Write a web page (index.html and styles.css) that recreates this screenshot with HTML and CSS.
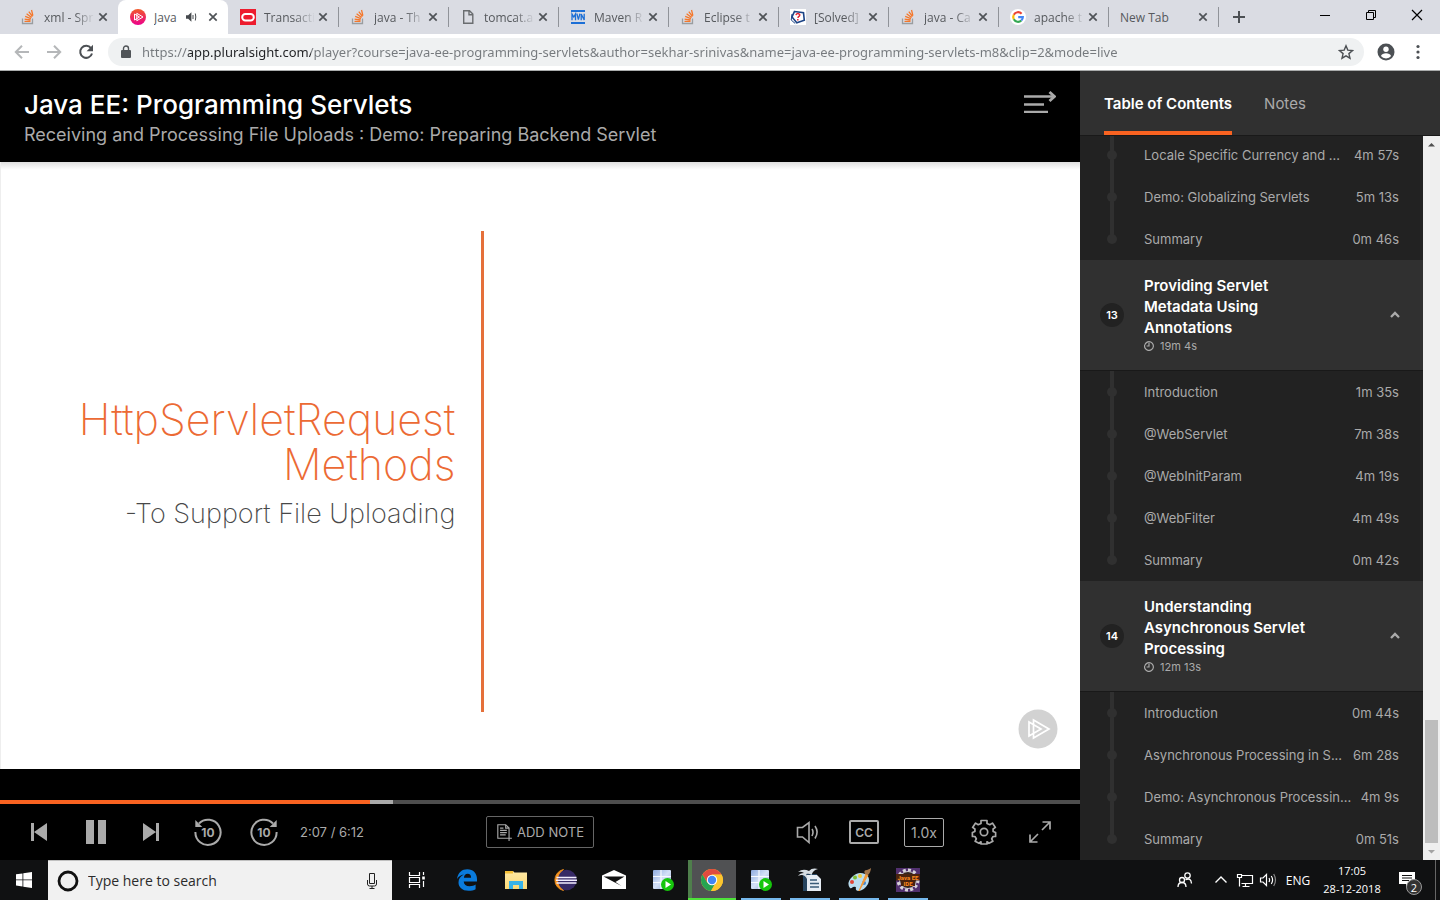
FILE: index.html
```html
<!DOCTYPE html>
<html lang="en">
<head>
<meta charset="utf-8">
<meta name="viewport" content="width=device-width, initial-scale=1">
<title>Java EE: Programming Servlets</title>
<link rel="stylesheet" href="styles.css">
</head>
<body>
<svg class="defs" aria-hidden="true">
  <defs>
    <linearGradient id="ps-fill" x1="0" y1="0" x2="0" y2="1"><stop offset="0" stop-color="#f15b2a"/><stop offset="1" stop-color="#ec008c"/></linearGradient>
    <linearGradient id="folder-fill" x1="0" y1="0" x2="0" y2="1"><stop offset="0" stop-color="#ffe9a6"/><stop offset="1" stop-color="#fbd976"/></linearGradient>
    <linearGradient id="server-fill" x1="0" y1="0" x2="1" y2="1"><stop offset="0" stop-color="#8fabdf"/><stop offset=".5" stop-color="#d5e1f7"/><stop offset="1" stop-color="#8aa5d6"/></linearGradient>
    <symbol id="so" viewBox="0 0 16 16">
      <path d="M2.500 9.500v5h10v-5" fill="none" stroke="#9a9da0" stroke-width="1.300"/>
      <path d="M4.500 12.300h6M4.600 10.100l6 .9M5.200 7.400l5.700 2.300M6.600 4.700l5 3.700M8.800 2.600l3.700 4.900M11.500 1l1.400 5.700" fill="none" stroke="#f4772b" stroke-width="1.300"/>
    </symbol>
    <symbol id="x" viewBox="0 0 16 16"><path d="M4.300 4.300l7.400 7.400M11.700 4.300l-7.400 7.400" fill="none" stroke="#4f5357" stroke-width="1.700"/></symbol>
    <symbol id="clock" viewBox="0 0 10 10"><path d="M5 .6a4.400 4.400 0 1 1-4.200 3M5 2v3H2.600M1 3.500A4.400 4.400 0 0 1 5 .6" fill="none" stroke="#aaa" stroke-width="1.200"/></symbol>
    <symbol id="chevron" viewBox="0 0 10 8"><path d="M1 6l4-4 4 4" fill="none" stroke="#aaa" stroke-width="2.300"/></symbol>
    <symbol id="server" viewBox="0 0 24 24">
      <rect x="2" y="2" width="18" height="19" rx="1" fill="url(#server-fill)"/>
      <path d="M2 8.500h18M2 14.500h18M10 2v19" stroke="#f7faff" stroke-width="1.200"/>
      <circle cx="16.500" cy="16.500" r="6.500" fill="#16c60c"/><path d="M14.500 13v7l5.500-3.500z" fill="#fff"/>
    </symbol>
  </defs>
</svg>

<header class="browser">
  <div class="tabstrip">
    <div class="tab"><svg class="fav"><use href="#so"/></svg><span class="tab-title">xml - Spr</span><button class="tab-close" aria-label="Close tab"><svg><use href="#x"/></svg></button></div>
    <div class="tab active">
      <svg class="fav" viewBox="0 0 16 16"><circle cx="8" cy="8" r="8" fill="url(#ps-fill)"/><path d="M4.500 5v6l5-3zM6.800 4.300v7.400L13 8z" fill="none" stroke="#fff" stroke-width="1"/></svg>
      <span class="tab-title short">Java</span>
      <svg class="audio" viewBox="0 0 12 12"><path d="M1 4.300h2.200L6.400 1.300v9.400L3.200 7.700H1z" fill="#45494d"/><path d="M8 4v4M10.300 2.500q1 3.500 0 7" fill="none" stroke="#45494d"/></svg>
      <button class="tab-close" aria-label="Close tab"><svg><use href="#x"/></svg></button>
    </div>
    <div class="tab ruled"><svg class="fav" viewBox="0 0 16 16"><path d="M0 0h16v16H0z" fill="#ed1c2e"/><rect x="2.200" y="5" width="11.600" height="6.400" rx="3.200" fill="none" stroke="#fff" stroke-width="2"/></svg><span class="tab-title">Transacti</span><button class="tab-close" aria-label="Close tab"><svg><use href="#x"/></svg></button></div>
    <div class="tab ruled"><svg class="fav"><use href="#so"/></svg><span class="tab-title">java - Th</span><button class="tab-close" aria-label="Close tab"><svg><use href="#x"/></svg></button></div>
    <div class="tab ruled"><svg class="fav" viewBox="0 0 16 16"><path d="M3.700 1.700h5.800l3.300 3.300v9.300H3.700zM9 1.700v4h3.800" fill="none" stroke="#6a6d70" stroke-width="1.400"/></svg><span class="tab-title">tomcat.a</span><button class="tab-close" aria-label="Close tab"><svg><use href="#x"/></svg></button></div>
    <div class="tab ruled"><svg class="fav" viewBox="0 0 16 16"><path d="M1 1h14v2H1zM1 13h14v2H1z" fill="#1c6fd6"/><path d="M2 11.300V5l1.800 3L5.500 5v6.300M6.900 4.700l1.500 6 1.500-6M11.200 11.300V5l3 6V4.700" fill="none" stroke="#1c6fd6" stroke-width="1.300"/></svg><span class="tab-title">Maven R</span><button class="tab-close" aria-label="Close tab"><svg><use href="#x"/></svg></button></div>
    <div class="tab ruled"><svg class="fav"><use href="#so"/></svg><span class="tab-title">Eclipse t</span><button class="tab-close" aria-label="Close tab"><svg><use href="#x"/></svg></button></div>
    <div class="tab ruled"><svg class="fav" viewBox="0 0 16 16"><path d="M0 0h16v16H0z" fill="#fff"/><path d="M4.500 2.500l9 1.300.8 7.500-7.500 2.500L2 8z" fill="none" stroke="#1d4486" stroke-width="1.600"/><path d="M2 5l-.8 6 4 3.500" fill="none" stroke="#1d4486"/><path d="M6 6.200q.4-2 2.600-1.500 2 .8.600 2.500-1.200.8-1.200 1.800M7.800 10v1.400" fill="none" stroke="#e32636" stroke-width="1.500"/></svg><span class="tab-title">[Solved]</span><button class="tab-close" aria-label="Close tab"><svg><use href="#x"/></svg></button></div>
    <div class="tab ruled"><svg class="fav"><use href="#so"/></svg><span class="tab-title">java - Ca</span><button class="tab-close" aria-label="Close tab"><svg><use href="#x"/></svg></button></div>
    <div class="tab ruled"><svg class="fav" viewBox="0 0 16 16"><circle cx="8" cy="8" r="8" fill="#fff"/><g fill="none" stroke-width="2.200"><path d="M11.600 4.800A4.800 4.800 0 0 0 3.800 5.700" stroke="#ea4335"/><path d="M3.800 5.700a4.800 4.800 0 0 0 0 4.600" stroke="#fbbc05"/><path d="M3.800 10.300a4.800 4.800 0 0 0 7.500 1.200" stroke="#34a853"/><path d="M11.300 11.500A4.800 4.800 0 0 0 12.800 8.200H8.200" stroke="#4285f4"/></g></svg><span class="tab-title">apache t</span><button class="tab-close" aria-label="Close tab"><svg><use href="#x"/></svg></button></div>
    <div class="tab ruled"><span class="tab-title whole">New Tab</span><button class="tab-close" aria-label="Close tab"><svg><use href="#x"/></svg></button></div>
    <button class="new-tab" aria-label="New tab"><svg viewBox="0 0 14 14"><path d="M7 1v12M1 7h12" stroke="#4c5054" stroke-width="2"/></svg></button>
    <div class="window-buttons">
      <button aria-label="Minimize"><svg viewBox="0 0 12 12"><path d="M1 6.500h10" stroke="#000"/></svg></button>
      <button aria-label="Restore"><svg viewBox="0 0 12 12"><path d="M1.500 3.500h7v7h-7zM3.500 3.500v-2h7v7h-2" fill="none" stroke="#000"/></svg></button>
      <button aria-label="Close"><svg viewBox="0 0 12 12"><path d="M1 1l10 10M11 1L1 11" stroke="#000" stroke-width="1.200"/></svg></button>
    </div>
  </div>
  <div class="toolbar">
    <button aria-label="Back"><svg viewBox="0 0 16 16"><path d="M15 8H2M8 1.800L1.800 8 8 14.200" fill="none" stroke="#b5b7b9" stroke-width="2"/></svg></button>
    <button aria-label="Forward"><svg viewBox="0 0 16 16"><path d="M1 8h13M8 1.800L14.200 8 8 14.200" fill="none" stroke="#b5b7b9" stroke-width="2"/></svg></button>
    <button aria-label="Reload"><svg viewBox="0 0 16 16"><path d="M13 4.200A6 6 0 1 0 14 9.500" fill="none" stroke="#4c5054" stroke-width="2"/><path d="M15 .8v6.400H8.600z" fill="#4c5054"/></svg></button>
    <div class="omnibox">
      <svg class="lock" viewBox="0 0 10 14"><path d="M1 5h8q1 0 1 1v6q0 1-1 1H1q-1 0-1-1V6q0-1 1-1z" fill="#505458"/><path d="M2.500 6V3.500a2.500 2.500 0 0 1 5 0V6" fill="none" stroke="#505458" stroke-width="1.400"/></svg>
      <input class="url" type="text" aria-label="Address" value="https://app.pluralsight.com/player?course=java-ee-programming-servlets&amp;author=sekhar-srinivas&amp;name=java-ee-programming-servlets-m8&amp;clip=2&amp;mode=live">
      <button class="star" aria-label="Bookmark"><svg viewBox="0 0 16 16"><path d="M8 1.800l1.800 4.300 4.700.4-3.600 3.100 1.100 4.600L8 11.800l-4 2.400 1.100-4.600-3.600-3.100 4.700-.4z" fill="none" stroke="#4c5054" stroke-width="1.400"/></svg></button>
    </div>
    <button class="profile" aria-label="Profile"><svg viewBox="0 0 18 18"><circle cx="9" cy="9" r="8.500" fill="#4c5054"/><circle cx="9" cy="6.300" r="2.700" fill="#fff"/><path d="M3.900 13q1.300-2.700 5.100-2.700t5.100 2.700Q12.300 15.400 9 15.400T3.900 13z" fill="#fff"/></svg></button>
    <button aria-label="Menu"><svg viewBox="0 0 16 16"><g fill="#4c5054"><circle cx="8" cy="2.500" r="1.600"/><circle cx="8" cy="8" r="1.600"/><circle cx="8" cy="13.500" r="1.600"/></g></svg></button>
  </div>
</header>

<div class="app">
  <main class="player">
    <header class="player-head">
      <div>
        <h1>Java EE: Programming Servlets</h1>
        <p>Receiving and Processing File Uploads : Demo: Preparing Backend Servlet</p>
      </div>
      <button class="panel-toggle" aria-label="Toggle side panel"><svg viewBox="0 0 34 24"><path d="M2 7.500h29M2 15.500h20M2 23h24" stroke="#aaa" stroke-width="2.600"/><path d="M27.500 3L32.500 7.500l-5 4.500" fill="none" stroke="#aaa" stroke-width="2.800"/></svg></button>
    </header>
    <section class="slide">
      <div class="slide-text">
        <h2>HttpServletRequest<br>Methods</h2>
        <p>-To Support File Uploading</p>
      </div>
      <svg class="watermark" viewBox="0 0 40 40"><circle cx="20" cy="20" r="19.500" fill="#d2d2d2"/><path d="M11 13v14l12-7zM15.500 11v18L31 20z" fill="none" stroke="#fff" stroke-width="1.700"/></svg>
    </section>
    <input class="progress" type="range" min="0" max="372" value="127" aria-label="Playback position">
    <div class="controls">
      <div class="group">
        <button aria-label="Previous clip"><svg viewBox="0 0 28 28"><path d="M5 5h3v18H5zM21 5v18L8 14z" fill="#aaa"/></svg></button>
        <button aria-label="Pause"><svg viewBox="0 0 28 28"><path d="M4 2h8v24H4zM16 2h8v24h-8z" fill="#aaa"/></svg></button>
        <button aria-label="Next clip"><svg viewBox="0 0 28 28"><path d="M18 5h3v18h-3zM5 5v18l13-9z" fill="#aaa"/></svg></button>
        <button aria-label="Back 10 seconds"><svg viewBox="0 0 28 28"><path d="M5 5.500A12.600 12.600 0 1 1 1.400 14" fill="none" stroke="#aaa" stroke-width="2"/><path d="M1.300 2v7h7z" fill="#aaa"/><text class="skip" x="14" y="18.500">10</text></svg></button>
        <button aria-label="Forward 10 seconds"><svg viewBox="0 0 28 28"><path d="M23 5.500A12.600 12.600 0 1 0 26.600 14" fill="none" stroke="#aaa" stroke-width="2"/><path d="M26.700 2v7h-7z" fill="#aaa"/><text class="skip" x="14" y="18.500">10</text></svg></button>
        <span class="time">2:07 / 6:12</span>
      </div>
      <button class="add-note"><svg viewBox="0 0 14 16"><path d="M9 13.500H1.500v-12h7l3 3V11M8.500 1.500v3h3M3.500 4.500h3M3.500 6.500h6M3.500 8.500h6M3.500 10.500h5M11.500 11v5M9 13.500h5" fill="none" stroke="#aaa"/></svg>ADD NOTE</button>
      <div class="group end">
        <button aria-label="Volume"><svg viewBox="0 0 28 28"><path d="M3.500 9.500h5L15 4.500v20l-6.500-5.500h-5zM18 11q2 3 0 7M21 8q4.200 6 0 12.500" fill="none" stroke="#aaa" stroke-width="1.600"/></svg></button>
        <button aria-label="Captions"><span class="box cc">CC</span></button>
        <button class="speed" aria-label="Playback speed"><span class="box rate">1.0x</span></button>
        <button aria-label="Settings"><svg viewBox="0 0 28 28"><path d="M11 2.500h6v3l2.800 1.200 2.600-1.600 3 4.300-2.300 1.600v2.500l2.500 1v4h-2.500l-1.400 2.300 1.200 2.500-3.900 2-2-1.500v2.200h-6v-2.200l-2 1.500-3.900-2 1.200-2.500-1.400-2.300H2.400v-4l2.500-1V11L2.600 9.400l3-4.300 2.600 1.600L11 5.500z" fill="none" stroke="#aaa" stroke-width="1.700" stroke-linejoin="round"/><circle cx="14" cy="14" r="3.700" fill="none" stroke="#aaa" stroke-width="1.700"/></svg></button>
        <button aria-label="Full screen"><svg viewBox="0 0 28 28"><path d="M16 12l8-8M16.500 4H24v7.500M12 16l-8 8M4 16.500V24h7.500" fill="none" stroke="#aaa" stroke-width="1.700"/></svg></button>
      </div>
    </div>
  </main>

  <aside class="side">
    <nav class="side-tabs"><button class="selected">Table of Contents</button><button>Notes</button></nav>
    <div class="side-body">
      <div class="toc">
        <ul class="clips">
          <li><a href="#"><span>Locale Specific Currency and ...</span><time>4m 57s</time></a></li>
          <li><a href="#"><span>Demo: Globalizing Servlets</span><time>5m 13s</time></a></li>
          <li><a href="#"><span>Summary</span><time>0m 46s</time></a></li>
        </ul>
        <button class="module"><span class="num">13</span><span class="module-text"><strong>Providing Servlet Metadata Using Annotations</strong><small><svg><use href="#clock"/></svg>19m 4s</small></span><svg class="caret"><use href="#chevron"/></svg></button>
        <ul class="clips">
          <li><a href="#"><span>Introduction</span><time>1m 35s</time></a></li>
          <li><a href="#"><span>@WebServlet</span><time>7m 38s</time></a></li>
          <li><a href="#"><span>@WebInitParam</span><time>4m 19s</time></a></li>
          <li><a href="#"><span>@WebFilter</span><time>4m 49s</time></a></li>
          <li><a href="#"><span>Summary</span><time>0m 42s</time></a></li>
        </ul>
        <button class="module"><span class="num">14</span><span class="module-text"><strong>Understanding Asynchronous Servlet Processing</strong><small><svg><use href="#clock"/></svg>12m 13s</small></span><svg class="caret"><use href="#chevron"/></svg></button>
        <ul class="clips">
          <li><a href="#"><span>Introduction</span><time>0m 44s</time></a></li>
          <li><a href="#"><span>Asynchronous Processing in S...</span><time>6m 28s</time></a></li>
          <li><a href="#"><span>Demo: Asynchronous Processin...</span><time>4m 9s</time></a></li>
          <li><a href="#"><span>Summary</span><time>0m 51s</time></a></li>
        </ul>
      </div>
      <div class="scrollbar" aria-hidden="true">
        <svg viewBox="0 0 17 17"><path d="M5 10.500h7L8.500 7z" fill="#505050"/></svg>
        <div class="thumb"></div>
        <svg viewBox="0 0 17 17"><path d="M5 7h7l-3.500 3.500z" fill="#a3a3a3"/></svg>
      </div>
    </div>
  </aside>
</div>

<footer class="taskbar">
  <button class="start" aria-label="Start"><svg viewBox="0 0 16 16"><path d="M0 2.300l6.500-.9v6.100H0zM7.300 1.300L16 0v7.500H7.300zM0 8.300h6.500v6.200L0 13.600zM7.300 8.300H16V16l-8.700-1.300z" fill="#fff"/></svg></button>
  <label class="search">
    <svg viewBox="0 0 22 22"><circle cx="11" cy="11" r="9" fill="none" stroke="#111" stroke-width="2.800"/></svg>
    <input type="text" placeholder="Type here to search" aria-label="Type here to search">
    <svg class="mic" viewBox="0 0 12 18"><path d="M3.500 1.500h5v10h-5zM1.500 8v4q0 2 2 2h5q2 0 2-2V8M6 14v2.500M3.500 16.500h5" fill="none" stroke="#222"/></svg>
  </label>
  <div class="apps">
    <button class="task-view" aria-label="Task View"><svg viewBox="0 0 24 24"><path d="M4.500 4v3.500h10V4M4.500 20v-3.500h10V20M4.500 9.500h10v5h-10zM18.500 4v3M18.500 13v6" fill="none" stroke="#fff" stroke-width="1.200"/><path d="M17.200 8.500h2.600v3h-2.600z" fill="#fff"/></svg></button>
    <button aria-label="Edge"><svg viewBox="0 0 24 24"><path d="M2 11C3 4.500 7 1.300 12.300 1.300c6 0 9.700 4 9.700 10v2.200H8.700c.2 3 2.300 4.700 5.900 4.700 2.500 0 4.700-.7 6-1.600v4.700c-1.800 1-4.300 1.500-7.100 1.500C7 22.800 3.500 19 3.500 14.500c0-3.600 2-6.300 5.300-7.900C6 7 3.600 8.600 2 11zm6.900-1.300h7.200c0-2.500-1.200-4-3.400-4s-3.500 1.500-3.800 4z" fill="#0a7bdc"/></svg></button>
    <button aria-label="File Explorer"><svg viewBox="0 0 24 24"><path d="M1 3h8l1.500 1.500H23V21H1z" fill="url(#folder-fill)"/><path d="M1 3h8v2.500H1z" fill="#f5bf35"/><path d="M5 21v-8h14v8h-4v-4H9v4z" fill="#38b3e8"/></svg></button>
    <button aria-label="Eclipse"><svg viewBox="0 0 24 24"><circle cx="13.500" cy="12" r="10.300" fill="#372a66"/><path d="M10.500 1.500A10.700 10.700 0 0 0 10.500 22.500Q4.500 18.500 4.500 12T10.500 1.500z" fill="#f7941e" stroke="#f7941e" stroke-width=".8"/><path d="M3.500 9.500H23.500M3 12.200H24M3.500 15H23.500" stroke="#f3eeff" stroke-width="1.400"/></svg></button>
    <button aria-label="Mail"><svg viewBox="0 0 24 24"><path d="M0 7.500L12 2l12 5.500V21H0z" fill="#fff"/><path d="M1.500 8.500h21L13.500 14l6 4z" fill="#111"/></svg></button>
    <button aria-label="Server"><svg><use href="#server"/></svg></button>
    <button class="running current" aria-label="Chrome"><svg viewBox="0 0 24 24"><circle cx="12" cy="12" r="11" fill="#fbc52f"/><path d="M2.500 6.500A11 11 0 0 1 21.500 6.500H12l-4.700 8.200z" fill="#e04a3f"/><path d="M2.500 6.500A11 11 0 0 0 11 23l4.500-8.200-8.200 0z" fill="#26a352"/><path d="M12 6.700h9.600A11 11 0 0 1 11 23l5.500-9z" fill="#fbc52f"/><circle cx="12" cy="12" r="5.200" fill="#fff"/><circle cx="12" cy="12" r="4.200" fill="#4285f4"/></svg></button>
    <button class="running" aria-label="Server"><svg><use href="#server"/></svg></button>
    <button class="running" aria-label="Writer"><svg viewBox="0 0 24 24"><path d="M5 6h14v17H5z" fill="#26445f"/><path d="M9 7h10l4 4v12H9z" fill="#e6edf4"/><path d="M12 12h7M12 15.500h9M12 19h9" stroke="#395b78" stroke-width="1.300"/><path d="M0 4q5-4 11-1Q14-.5 20 1q-5 1-6.500 6Q11 5 8 6 10 8 9 11 6 5 0 8q2-3 6-3Q3 3 0 4z" fill="#d5dde3"/></svg></button>
    <button class="running" aria-label="Paint"><svg viewBox="0 0 24 24"><path d="M3 20Q-1 15 5 9q6-6 13-3 6 3 3 10-4 7-10 7-3-1-2-3 0-2-3-1-2 2-3 1z" fill="#b9ddef"/><circle cx="5" cy="14" r="2" fill="#e24537"/><circle cx="8" cy="9.500" r="2" fill="#7cbd33"/><circle cx="13" cy="8" r="2" fill="#f2ca39"/><circle cx="17" cy="15" r="2" fill="#4485ce"/><path d="M19 6l-7 17 9-16z" fill="#f59b3a" stroke="#f59b3a"/><path d="M18 6q-2-4 2-4 3-1 4-2-.5 5-3 7z" fill="#a5774c"/></svg></button>
    <button class="running" aria-label="Java EE IDE"><svg viewBox="0 0 24 24"><path d="M0 0h24v24H0z" fill="#51306f"/><circle cx="12" cy="12" r="10" fill="none" stroke="#d7d3da" stroke-width="3" stroke-dasharray="3 2.200"/><circle cx="12" cy="12" r="8.500" fill="#33251f" stroke="#d7d3da"/><path d="M0 6h24v6.500H0zM5 12h14v6H5z" fill="#49230f"/><text class="ide" x="12" y="11.500">Java EE</text><text class="ide" x="12" y="17.500">IDE</text></svg></button>
  </div>
  <div class="tray">
    <button class="people" aria-label="People"><svg viewBox="0 0 18 18"><g fill="none" stroke="#fff" stroke-width="1.300"><circle cx="11.500" cy="4.500" r="2.700"/><circle cx="6" cy="9" r="2.500"/><path d="M2 16q0-4.500 4-4.500t4 4.500M9.500 8.700q5.500-2.500 6 3.800"/></g></svg></button>
    <button aria-label="Show hidden icons"><svg viewBox="0 0 18 18"><path d="M3.500 11.500L9 6l5.500 5.500" fill="none" stroke="#fff" stroke-width="1.400"/></svg></button>
    <button aria-label="Network"><svg viewBox="0 0 18 18"><path d="M5 4.500h11.500v8H5.500M1.500 3.500h4v3h-4zM3.500 6.500v9M9.500 12.500v3M6.500 15.500h7" fill="none" stroke="#fff" stroke-width="1.200"/></svg></button>
    <button class="sound" aria-label="Sound"><svg viewBox="0 0 18 18"><path d="M1.500 7h2.500l3.500-3.500v11L4 11H1.500zM10 7q1.200 2 0 4M12.300 5q2.600 4 0 8" fill="none" stroke="#fff" stroke-width="1.200"/><path d="M14.700 3q3.600 6 0 12" fill="none" stroke="#888" stroke-width="1.200"/></svg></button>
    <button class="lang">ENG</button>
    <button class="clock">17:05<br>28-12-2018</button>
    <button class="notices" aria-label="Notifications"><svg viewBox="0 0 18 18"><path d="M1 1h16v12h-6l-3 3.500V13H1z" fill="#fff"/><path d="M4 4.500h10M4 7h10M4 9.500h7" stroke="#111"/></svg><span class="count">2</span></button>
    <button class="desktop" aria-label="Show desktop"></button>
  </div>
</footer>
</body>
</html>
```
FILE: styles.css
```css
* { box-sizing: border-box; }

body {
  margin: 0;
  height: 100vh;
  display: flex;
  flex-direction: column;
  overflow: hidden;
  background: #000;
  font-family: Inter, "Liberation Sans", sans-serif;
}

button {
  display: flex;
  align-items: center;
  justify-content: center;
  padding: 0;
  border: 0;
  background: none;
  color: inherit;
  font: inherit;
}

svg { display: block; flex: none; }
.defs { position: absolute; width: 0; height: 0; }

/* Browser chrome */
.browser {
  flex: none;
  background: #fff;
  border-bottom: 1px solid #a9abab;
  font-family: "Open Sans", "Noto Sans", sans-serif;
}
.tabstrip {
  display: flex;
  height: 34px;
  padding-left: 8px;
  background: #dadce3;
}
.tab {
  position: relative;
  flex: 0 1 110px;
  min-width: 0;
  display: flex;
  align-items: center;
  gap: 8px;
  padding: 0 7px 0 12px;
  color: #56595d;
  font-size: 12px;
  white-space: nowrap;
}
.tab.active {
  border-radius: 8px 8px 0 0;
  background: #fff;
}
.tab.ruled::after {
  content: "";
  position: absolute;
  right: -1px;
  top: 7px;
  height: 20px;
  border-right: 1px solid #909399;
}
.fav { width: 16px; height: 16px; }
.tab-title {
  flex: 1;
  margin-right: -8px;
  overflow: hidden;
  -webkit-mask-image: linear-gradient(to right, #000 60%, transparent);
  mask-image: linear-gradient(to right, #000 60%, transparent);
}
.tab-title.whole,
.tab-title.short { -webkit-mask-image: none; mask-image: none; }
.tab-title.short { flex: none; margin-right: 0; }
.audio { width: 12px; height: 12px; margin-left: auto; }
.tab-close svg { width: 16px; height: 16px; }
.new-tab { width: 42px; }
.new-tab svg { width: 14px; height: 14px; }
.window-buttons { display: flex; height: 29px; margin-left: auto; }
.window-buttons button { width: 46px; }
.window-buttons svg { width: 12px; height: 12px; }

.toolbar {
  display: flex;
  align-items: center;
  height: 36px;
  padding: 0 6px;
}
.toolbar button { width: 32px; height: 28px; }
.toolbar svg { width: 16px; height: 16px; }
.omnibox {
  flex: 1;
  display: flex;
  align-items: center;
  height: 28px;
  margin: 0 6px;
  padding: 0 2px 0 13px;
  border-radius: 14px;
  background: #eff1f2;
}
.toolbar .lock { width: 10px; height: 14px; }
.url {
  flex: 1;
  min-width: 0;
  margin-left: 11px;
  padding: 0;
  border: 0;
  outline: 0;
  background: linear-gradient(to right, #75797d 46px, #202124 46px, #202124 169px, #75797d 169px);
  -webkit-background-clip: text;
  background-clip: text;
  color: transparent;
  font: 13px/20px "Noto Sans", "Open Sans", sans-serif;
}
.toolbar .profile svg { width: 18px; height: 18px; }

/* Player */
.app { flex: 1; min-height: 0; display: flex; }
.player {
  flex: 3;
  min-width: 0;
  display: flex;
  flex-direction: column;
  color: #aaa;
}
.player-head {
  display: flex;
  justify-content: space-between;
  align-items: flex-start;
  padding: 18px 24px 16px;
}
.player-head h1 {
  margin: 0;
  color: #fff;
  font-size: 26px;
  font-weight: 500;
  line-height: 32px;
}
.player-head p {
  margin: 2px 0 0;
  font-size: 18px;
  line-height: 23px;
}
.panel-toggle svg { width: 34px; height: 24px; }
.slide {
  position: relative;
  flex: 1;
  display: flex;
  padding: 69px 0 57px;
  background: linear-gradient(#dedede, #fff 8px);
  border-left: 1px solid #eee;
}
.slide-text {
  width: 44.8%;
  display: flex;
  flex-direction: column;
  justify-content: center;
  padding: 0 26px 16px 0;
  border-right: 3px solid #e5703a;
  text-align: right;
}
.slide-text h2 {
  margin: 0;
  color: #ec6a34;
  font-size: 43px;
  font-weight: 200;
  line-height: 45px;
}
.slide-text p {
  margin: 10px 0 0;
  color: #484848;
  font-size: 27px;
  font-weight: 200;
  line-height: 34px;
}
.watermark {
  position: absolute;
  right: 22px;
  bottom: 20px;
  width: 40px;
  height: 40px;
}
.progress {
  appearance: none;
  width: 100%;
  height: 4px;
  margin: 31px 0 0;
  background: linear-gradient(to right, #f96321 34.3%, #a9a9a9 34.3%, #a9a9a9 36.400%, #4e4e4e 36.400%);
}
.progress::-webkit-slider-thumb { appearance: none; width: 0; height: 0; }
.controls {
  display: grid;
  grid-template-columns: 1fr auto 1fr;
  align-items: center;
  height: 56px;
  padding: 0 12px;
}
.group { display: flex; align-items: center; }
.group.end { justify-content: flex-end; }
.group button { width: 56px; height: 56px; }
.group .speed { width: 64px; }
.group svg { width: 28px; height: 28px; }
.skip {
  fill: #aaa;
  font-size: 12px;
  font-weight: 700;
  text-anchor: middle;
}
.time { margin-left: 8px; font-size: 13px; }
.add-note {
  gap: 5px;
  height: 32px;
  padding: 0 9px;
  border: 1px solid #666;
  border-radius: 2px;
  font-size: 13px;
}
.add-note svg { width: 16px; height: 18px; }
.box {
  display: grid;
  place-items: center;
  border: 1px solid #aaa;
  border-radius: 2px;
}
.cc {
  width: 30px;
  height: 24px;
  border-width: 2px;
  font-size: 12px;
  font-weight: 600;
}
.rate { width: 40px; height: 29px; font-size: 14px; }

/* Side panel */
.side {
  flex: 1;
  min-width: 0;
  display: flex;
  flex-direction: column;
  background: #222;
  color: #aaa;
}
.side-tabs {
  flex: none;
  display: flex;
  gap: 32px;
  height: 65px;
  padding: 0 24px;
  background: #303030;
  border-bottom: 1px solid #191919;
  font-size: 15px;
}
.side-tabs button { border-top: 4px solid transparent; border-bottom: 4px solid transparent; }
.side-tabs .selected { border-bottom-color: #f96321; color: #fff; font-weight: 600; }
.side-body { flex: 1; min-height: 0; display: flex; }
.toc {
  flex: 1;
  min-width: 0;
  display: flex;
  flex-direction: column;
  justify-content: flex-end;
  overflow: hidden;
}
.clips { flex: none; margin: 0; padding: 0; list-style: none; }
.clips li { position: relative; }
.clips li::before {
  content: "";
  position: absolute;
  left: 30px;
  top: 0;
  width: 4px;
  height: 100%;
  background: #303030;
}
.clips li:last-child::before { height: 50%; }
.clips li::after {
  content: "";
  position: absolute;
  left: 27px;
  top: 16px;
  width: 10px;
  height: 10px;
  border-radius: 50%;
  background: #303030;
}
.clips a {
  display: flex;
  justify-content: space-between;
  align-items: center;
  height: 42px;
  padding: 0 24px 0 64px;
  color: inherit;
  font-size: 13px;
  text-decoration: none;
  white-space: nowrap;
}
.module {
  flex: none;
  width: 100%;
  padding: 15px 23px 16px 20px;
  background: #303030;
  border-bottom: 1px solid #191919;
  text-align: left;
}
.num {
  display: grid;
  place-items: center;
  width: 24px;
  height: 24px;
  border-radius: 50%;
  background: #222;
  color: #fff;
  font-size: 11px;
  font-weight: 600;
}
.module-text { flex: 1; margin: 0 70px 0 20px; }
.module strong {
  display: block;
  color: #fff;
  font-size: 15px;
  font-weight: 600;
  line-height: 21px;
}
.module small {
  display: flex;
  align-items: center;
  gap: 6px;
  font-size: 11px;
  line-height: 16px;
}
.module small svg { width: 10px; height: 10px; }
.caret { width: 10px; height: 8px; }
.scrollbar {
  width: 17px;
  display: flex;
  flex-direction: column;
  justify-content: flex-end;
  background: #efefef;
}
.scrollbar svg { width: 17px; height: 17px; }
.scrollbar svg:first-child { margin-bottom: auto; }
.thumb { height: 17%; margin: 0 2px; background: #bdbdbd; }

/* Taskbar */
.taskbar {
  flex: none;
  display: flex;
  height: 40px;
  background: #101112;
  color: #fff;
  font-family: "Open Sans", "Noto Sans", sans-serif;
}
.start { width: 48px; }
.start svg { width: 16px; height: 16px; }
.search {
  flex: 0 1 344px;
  display: flex;
  align-items: center;
  gap: 9px;
  padding: 0 14px 0 9px;
  border-top: 1px solid #c0c0c0;
  background: #f1f1f1;
}
.search svg { width: 22px; height: 22px; }
.search .mic { width: 12px; height: 18px; }
.search input {
  flex: 1;
  min-width: 0;
  padding: 0;
  border: 0;
  outline: 0;
  background: none;
  font: 14px "Open Sans", "Noto Sans", sans-serif;
}
.search input::placeholder { color: #2b2b2b; }
.apps { display: flex; gap: 1px; }
.apps button { position: relative; width: 48px; }
.apps .task-view { width: 50px; }
.apps svg { width: 24px; height: 24px; }
.apps .running::after {
  content: "";
  position: absolute;
  left: 4px;
  right: 4px;
  bottom: 0;
  height: 2px;
  background: #76b9ed;
}
.apps .current { background: linear-gradient(to right, #4f7f4c 4px, #505153 4px); }
.apps .current::after { left: 0; right: 0; background: #4ee33a; }
.ide {
  fill: #ff8a1d;
  font: 700 6px Roboto, sans-serif;
  text-anchor: middle;
}
.tray { display: flex; margin-left: auto; font-size: 12px; }
.tray button { width: 24px; }
.tray svg { width: 18px; height: 18px; }
.tray .people { width: 48px; }
.tray .sound { width: 22px; }
.tray .lang { width: 38px; }
.tray .clock { width: 70px; font-size: 11px; line-height: 18px; }
.tray .notices { position: relative; width: 48px; padding-right: 8px; }
.count {
  position: absolute;
  left: 19px;
  top: 19px;
  display: grid;
  place-items: center;
  width: 16px;
  height: 16px;
  border: 1px solid #999;
  border-radius: 50%;
  background: #333;
  font-size: 11px;
}
.tray .desktop { width: 5px; border-left: 1px solid #666; }
```
